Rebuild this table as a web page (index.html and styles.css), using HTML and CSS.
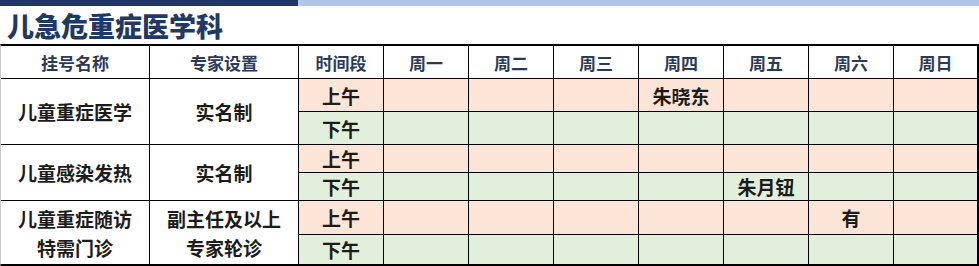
FILE: index.html
```html
<!DOCTYPE html>
<html lang="zh">
<head>
<meta charset="utf-8">
<title>儿急危重症医学科</title>
<link rel="stylesheet" href="styles.css">
</head>
<body>
<div class="topbar"><div class="bar-dark"></div><div class="bar-light"></div></div>
<h1 class="title">儿急危重症医学科</h1>
<div class="grid">
  <div class="cell head">挂号名称</div>
  <div class="cell head">专家设置</div>
  <div class="cell head">时间段</div>
  <div class="cell head">周一</div>
  <div class="cell head">周二</div>
  <div class="cell head">周三</div>
  <div class="cell head">周四</div>
  <div class="cell head">周五</div>
  <div class="cell head">周六</div>
  <div class="cell head">周日</div>

  <div class="cell label span2">儿童重症医学</div>
  <div class="cell label span2">实名制</div>
  <div class="cell am">上午</div>
  <div class="cell am"></div><div class="cell am"></div><div class="cell am"></div>
  <div class="cell am">朱晓东</div>
  <div class="cell am"></div><div class="cell am"></div><div class="cell am"></div>
  <div class="cell pm">下午</div>
  <div class="cell pm"></div><div class="cell pm"></div><div class="cell pm"></div><div class="cell pm"></div>
  <div class="cell pm"></div><div class="cell pm"></div><div class="cell pm"></div>

  <div class="cell label span2">儿童感染发热</div>
  <div class="cell label span2">实名制</div>
  <div class="cell am">上午</div>
  <div class="cell am"></div><div class="cell am"></div><div class="cell am"></div><div class="cell am"></div>
  <div class="cell am"></div><div class="cell am"></div><div class="cell am"></div>
  <div class="cell pm">下午</div>
  <div class="cell pm"></div><div class="cell pm"></div><div class="cell pm"></div><div class="cell pm"></div>
  <div class="cell pm">朱月钮</div>
  <div class="cell pm"></div><div class="cell pm"></div>

  <div class="cell label span2 multi">儿童重症随访<br>特需门诊</div>
  <div class="cell label span2 multi">副主任及以上<br>专家轮诊</div>
  <div class="cell am">上午</div>
  <div class="cell am"></div><div class="cell am"></div><div class="cell am"></div><div class="cell am"></div>
  <div class="cell am"></div>
  <div class="cell am">有</div>
  <div class="cell am"></div>
  <div class="cell pm">下午</div>
  <div class="cell pm"></div><div class="cell pm"></div><div class="cell pm"></div><div class="cell pm"></div>
  <div class="cell pm"></div><div class="cell pm"></div><div class="cell pm"></div>
</div>
</body>
</html>
```

FILE: styles.css
```css
html, body {
  margin: 0;
  padding: 0;
  background: #ffffff;
}
body {
  width: 979px;
  height: 266px;
  overflow: hidden;
  font-family: "Noto Sans CJK SC", "Noto Sans", sans-serif;
}
.topbar {
  display: flex;
  height: 6px;
}
.bar-dark {
  width: 298px;
  background: #22385f;
}
.bar-light {
  flex: 1;
  background: #b4c6e7;
}
.title {
  margin: 0;
  height: 36px;
  padding-top: 2px;
  line-height: 36px;
  padding-left: 7px;
  font-size: 27px;
  font-weight: 900;
  color: #1f3864;
}
.grid {
  display: grid;
  grid-template-columns: 148px 148px 84px 84px 84px 84px 84px 84px 84px 83px;
  grid-template-rows: 32px 32px 32px 27px 27px 33px 29px;
  gap: 1px;
  background: #000000;
  border-top: 2px solid #000000;
  border-bottom: 2px solid #000000;
  border-left: 1px solid #c9c9c9;
  border-right: 2px solid #000000;
}
.cell {
  display: flex;
  align-items: center;
  justify-content: center;
  font-weight: 700;
  font-size: 19px;
  color: #1c1c1c;
  background: #ffffff;
  white-space: nowrap;
}
.head {
  font-size: 17px;
  color: #2b3a58;
}
.span2 {
  grid-row: span 2;
}
.multi {
  text-align: center;
  line-height: 29px;
}
.am {
  background: #fce4d6;
}
.pm {
  background: #e2efda;
}
```
